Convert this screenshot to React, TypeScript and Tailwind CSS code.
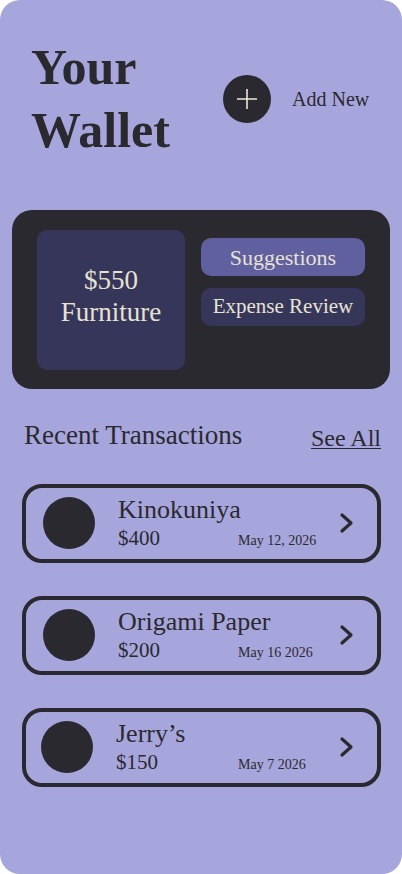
const serif = { fontFamily: '"Liberation Serif", "DejaVu Serif", serif' };

const transactions = [
  { name: 'Kinokuniya', amount: '$400', date: 'May 12, 2026' },
  { name: 'Origami Paper', amount: '$200', date: 'May 16 2026' },
  { name: 'Jerry’s', amount: '$150', date: 'May 7 2026' },
];

const Chevron = () => (
  <svg width="16" height="22" viewBox="0 0 16 22" fill="none">
    <polyline points="3,3 12,11 3,19" stroke="#2a292f" strokeWidth="3.2" strokeLinecap="round" strokeLinejoin="round" />
  </svg>
);

export default function App() {
  return (
    <div className="bg-white">
      <div className="min-h-[874px] rounded-[20px] bg-[#a7a6dc] pt-[36px] pb-8 text-[#2a292f]" style={serif}>
        {/* header */}
        <div className="flex items-center pl-[31px]">
          <h1 className="w-[192px] text-[50px] font-bold leading-[63px]">
            Your
            <br />
            Wallet
          </h1>
          <button className="flex h-12 w-12 items-center justify-center rounded-full bg-[#2a292f]">
            <svg width="22" height="22" viewBox="0 0 22 22">
              <path d="M11 1v20M1 11h20" stroke="#ece8d6" strokeWidth="1.6" />
            </svg>
          </button>
          <span className="ml-[21px] text-[20px]">Add New</span>
        </div>

        {/* summary card */}
        <div className="mx-[12px] mt-[48px] flex h-[179px] gap-4 rounded-[20px] bg-[#2a292f] pl-[25px] pt-[20px] text-[#e6e2d3]">
          <div className="flex h-[140px] w-[148px] flex-col items-center justify-center rounded-[10px] bg-[#35365a] pb-2 text-[27px] leading-[32px]">
            <span>$550</span>
            <span>Furniture</span>
          </div>
          <div className="flex flex-col gap-3 pt-2">
            <button className="h-[38px] w-[164px] rounded-[10px] bg-[#605f9f] text-[22px]">Suggestions</button>
            <button className="h-[38px] w-[164px] rounded-[10px] bg-[#36365a] text-[21px]">Expense Review</button>
          </div>
        </div>

        {/* recent */}
        <div className="mt-[26px] flex items-end justify-between pl-[24px] pr-[21px]">
          <h2 className="text-[27px]">Recent Transactions</h2>
          <a className="text-[24px] underline decoration-1 underline-offset-2">See All</a>
        </div>

        <div className="mt-[28px] flex flex-col gap-[33px] pl-[22px] pr-[21px]">
          {transactions.map((t, i) => (
            <div
              key={t.name}
              className={`flex h-[79px] items-center rounded-[20px] border-4 border-[#2a292f] pr-[22px] ${i === 2 ? 'pl-[15px]' : 'pl-[17px]'}`}
            >
              <div className="h-[52px] w-[52px] shrink-0 rounded-full bg-[#2a292f]" />
              <div className="ml-[23px] flex flex-1 flex-col">
                <span className="text-[26px] leading-[30px]">{t.name}</span>
                <div className="flex items-baseline">
                  <span className={`${i === 2 ? 'w-[122px]' : 'w-[120px]'} text-[21px] leading-[26px]`}>{t.amount}</span>
                  <span className="text-[14px]">{t.date}</span>
                </div>
              </div>
              <Chevron />
            </div>
          ))}
        </div>
      </div>
    </div>
  );
}
